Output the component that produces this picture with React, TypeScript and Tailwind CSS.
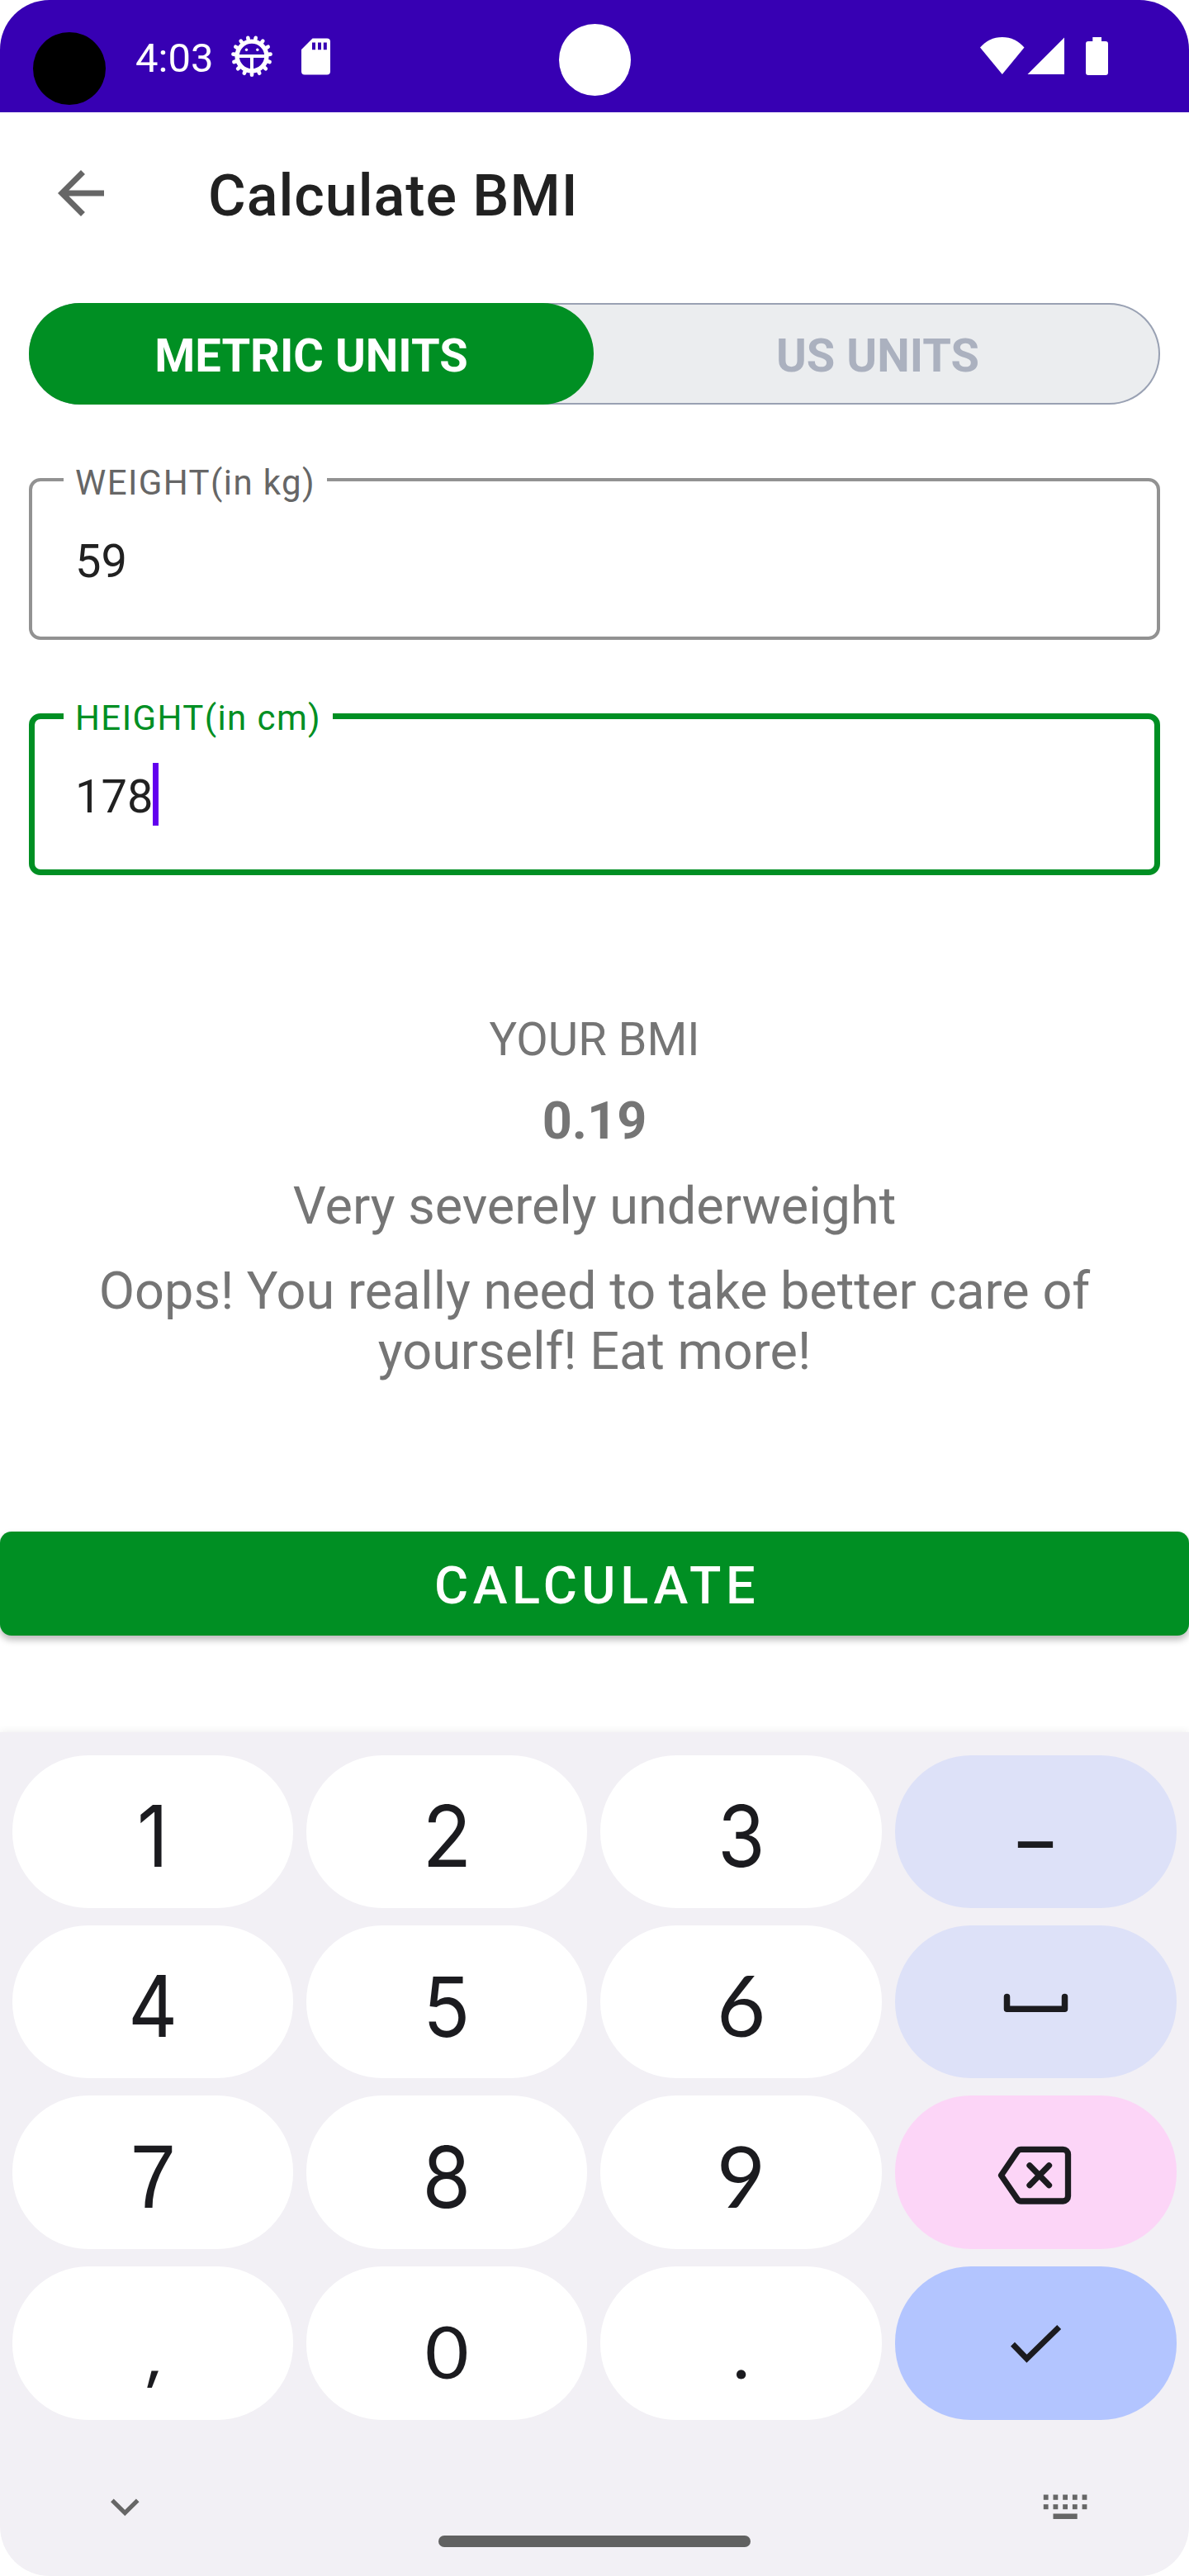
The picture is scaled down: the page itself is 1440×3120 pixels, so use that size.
import React from "react";

const GEAR_TEETH = Array.from({ length: 15 }, (_, i) => {
  const a = Math.PI / 2 + (i * 2 * Math.PI) / 15;
  return {
    x1: 25 + Math.cos(a) * 18,
    y1: 25 + Math.sin(a) * 18,
    x2: 25 + Math.cos(a) * 22.7,
    y2: 25 + Math.sin(a) * 22.7,
  };
});

function DebugIcon() {
  return (
    <svg className="ml-[22px] h-[50px] w-[50px]" viewBox="0 0 50 50" fill="none" stroke="#fff">
      <circle cx="25" cy="25" r="17.9" strokeWidth="5.400" />
      {GEAR_TEETH.map((t, i) => (
        <line key={i} {...t} strokeWidth="4.600" strokeLinecap="round" />
      ))}
      <path d="M9 25H41" strokeWidth="4" />
      <path d="M25 25V42" strokeWidth="4" />
      <circle cx="18.5" cy="17.3" r="1.7" fill="#fff" stroke="none" />
      <circle cx="31.8" cy="17.3" r="1.7" fill="#fff" stroke="none" />
    </svg>
  );
}

function SdCardIcon() {
  return (
    <svg className="ml-[35px] h-[45px] w-[35px]" viewBox="0 0 35 45">
      <path
        fill="#fff"
        fillRule="evenodd"
        d="M13.5 .5H31a4 4 0 0 1 4 4V40.500a4 4 0 0 1-4 4H4a4 4 0 0 1-4-4V14ZM13 5.500v8.700h4V5.500Zm7 0v8.700h4V5.500Zm6.800 0v8.700h4V5.500Z"
      />
    </svg>
  );
}

function StatusBar() {
  return (
    <header className="relative flex h-[136px] items-center bg-[#3700b3] pr-[98px] pl-[40px] text-white">
      <div className="mt-[30px] h-[88px] w-[88px] rounded-full bg-black" />
      <span className="ml-[36px] w-[94px] pt-[6px] text-[49px] leading-[58px]">4:03</span>
      <DebugIcon />
      <SdCardIcon />
      <div className="absolute top-[29px] left-[677px] h-[87px] w-[87px] rounded-full bg-white" />
      <div className="ml-auto flex items-start">
        <svg className="h-[46px] w-[54px]" viewBox="0 0 54 46" fill="#fff">
          <path d="M0 12.500C7 4.500 16 0 26.800 0S46.500 4.500 53.500 12.500L26.800 45Z" />
        </svg>
        <svg className="ml-[3px] h-[46px] w-[46px]" viewBox="0 0 46 46" fill="#fff">
          <path d="M.5 45L45 .5V45Z" />
        </svg>
        <svg className="ml-[25px] h-[46px] w-[27px]" viewBox="0 0 27 46" fill="#fff">
          <path d="M8.300 0H19V5H24a3 3 0 0 1 3 3V43a3 3 0 0 1-3 3H3a3 3 0 0 1-3-3V8a3 3 0 0 1 3-3H8.300Z" />
        </svg>
      </div>
    </header>
  );
}

function Toolbar() {
  return (
    <div className="flex h-[196px] items-center pl-[56px]">
      <svg className="h-[84px] w-[84px]" viewBox="0 0 24 24" fill="#666">
        <path d="M20 11H7.830l5.590-5.590L12 4l-8 8 8 8 1.410-1.410L7.830 13H20v-2z" />
      </svg>
      <h1 className="ml-[112px] pt-[6px] text-[70px] leading-[82px] font-medium tracking-[0.98px] text-[#212121]">
        Calculate BMI
      </h1>
    </div>
  );
}

function UnitToggle() {
  return (
    <div className="mx-[35px] mt-[35px] flex h-[123px] rounded-full bg-[#ebedef] text-[56px] font-bold shadow-[inset_0_0_0_2px_#99a1b3]">
      <button className="flex flex-1 items-center justify-center rounded-full bg-[#008f23] pt-[5px] text-white">
        METRIC UNITS
      </button>
      <button className="flex flex-1 items-center justify-center pt-[5px] pl-[2px] text-[#abb1bf]">US UNITS</button>
    </div>
  );
}

function Field(props: { label: string; value: string; focused?: boolean; className: string }) {
  const { label, value, focused, className } = props;
  return (
    <div
      className={
        "relative mx-[35px] flex h-[196px] items-center rounded-[14px] " +
        (focused ? "border-[7px] border-[#008f23] pl-[49px] " : "border-4 border-[#929292] pl-[52px] ") +
        className
      }
    >
      <span
        className={
          "absolute bg-white pr-[16px] pl-[14px] text-[42px] leading-[50px] tracking-[1.4px] whitespace-nowrap " +
          (focused ? "-top-[26px] left-[35px] w-[326px] text-[#008f23]" : "-top-[23px] left-[38px] w-[319px] text-[#666]")
        }
      >
        {label}
      </span>
      <span className="pt-[6px] text-[56px] leading-[66px] text-[#212121]">{value}</span>
      {focused && <span className="h-[76px] w-[7px] bg-[#6200ee]" />}
    </div>
  );
}

function Result() {
  return (
    <section className="mt-[166px] flex flex-col items-center gap-[29px] text-center text-[63px] leading-[74px] text-[#757575]">
      <p className="text-[56px] leading-[66px]">YOUR BMI</p>
      <p className="font-bold">0.19</p>
      <p>Very severely underweight</p>
      <p className="w-[1300px] leading-[73px]">
        Oops! You really need to take better care of
        <br />
        yourself! Eat more!
      </p>
    </section>
  );
}

function SpaceIcon() {
  return (
    <svg className="h-[186px] w-[341px]" viewBox="0 0 341 186" fill="none" stroke="#1b1b1f">
      <path d="M135.500 86.500V101.300H205.500V86.500" strokeWidth="7.500" strokeLinecap="round" strokeLinejoin="round" />
    </svg>
  );
}

function BackspaceIcon() {
  return (
    <svg
      className="h-[186px] w-[341px]"
      viewBox="0 0 341 186"
      fill="none"
      stroke="#1b1b1f"
      strokeWidth="7.300"
      strokeLinecap="round"
      strokeLinejoin="round"
    >
      <path d="M152.500 65.300H203.500a6 6 0 0 1 6 6V122a6 6 0 0 1-6 6H152.500a5 5 0 0 1-4-2L128.500 96.700L148.500 67.300a5 5 0 0 1 4-2Z" />
      <path d="M163 84.800L186.500 108.700M186.500 84.800L163 108.700" />
    </svg>
  );
}

function CheckIcon() {
  return (
    <svg className="h-[186px] w-[341px]" viewBox="0 0 341 186" fill="none" stroke="#1b1b1f" strokeWidth="7">
      <path d="M142.500 94.300L159.500 111.700L198.700 73.500" />
    </svg>
  );
}

const KEYS: { id: string; bg: string; content: React.ReactNode; font?: string }[] = [
  { id: "1", bg: "bg-white", content: "1", font: "font-['Inter'] text-[103px] leading-[195px] scale-x-[0.9]" },
  { id: "2", bg: "bg-white", content: "2", font: "font-['Inter'] text-[103px] leading-[195px] scale-x-[0.95]" },
  { id: "3", bg: "bg-white", content: "3", font: "font-['Inter'] text-[103px] leading-[195px] scale-x-[0.9]" },
  { id: "-", bg: "bg-[#dde1f8]", content: "-", font: "font-['Inter'] text-[96px] leading-[207px] scale-x-[1.38]" },
  { id: "4", bg: "bg-white", content: "4", font: "font-['Inter'] text-[103px] leading-[195px] scale-x-[0.9]" },
  { id: "5", bg: "bg-white", content: "5", font: "font-['Inter'] text-[101px] leading-[196px] scale-x-[0.93]" },
  { id: "6", bg: "bg-white", content: "6", font: "font-['Lato'] text-[102px] leading-[191px]" },
  { id: "space", bg: "bg-[#dde1f8]", content: <SpaceIcon /> },
  { id: "7", bg: "bg-white", content: "7", font: "font-['Liberation_Sans'] text-[109px] leading-[196px] scale-x-[0.92]" },
  { id: "8", bg: "bg-white", content: "8", font: "font-['Inter'] text-[103px] leading-[197px] scale-x-[0.92]" },
  { id: "9", bg: "bg-white", content: "9", font: "font-['Lato'] text-[102px] leading-[193px]" },
  { id: "backspace", bg: "bg-[#fcd5f7]", content: <BackspaceIcon /> },
  { id: ",", bg: "bg-white", content: ",", font: "pl-[8px] font-['Inter'] text-[72px] leading-[215px] font-medium -skew-x-6" },
  { id: "0", bg: "bg-white", content: "0", font: "font-['Lato'] text-[87px] leading-[205px] scale-x-[1.05]" },
  { id: ".", bg: "bg-white", content: ".", font: "font-['Lato'] text-[90px] leading-[203px]" },
  { id: "enter", bg: "bg-[#b3c5ff]", content: <CheckIcon /> },
];

function Keyboard() {
  return (
    <section className="mt-[117px] flex-1 rounded-b-[60px] bg-[#f2f0f5] px-[15px] pt-[28px] text-[#1b1b1f] shadow-[0_-2px_8px_rgba(0,0,0,0.06)]">
      <div className="grid grid-cols-[340px_340px_341px_341px] grid-rows-[185px_185px_186px_186px] gap-x-[16px] gap-y-[21px]">
        {KEYS.map((k) => (
          <button key={k.id} className={"flex items-start justify-center overflow-hidden rounded-[92px] " + k.bg}>
            <span className={k.font}>{k.content}</span>
          </button>
        ))}
      </div>
      <div className="mt-[90px] flex items-start justify-between pr-[108px] pl-[119px]">
        <svg className="mt-[5px] h-[22px] w-[36px]" viewBox="0 0 36 22" fill="none" stroke="#666" strokeWidth="5.200">
          <path d="M1.900 2.300L17.300 17.500L32.700 2.300" />
        </svg>
        <svg className="h-[31px] w-[54px]" viewBox="0 0 54 31" fill="#666">
          {[0, 1, 2, 3, 4].map((c) => (
            <g key={c}>
              <rect x={0.8 + c * 11.700} y="0.500" width="5.800" height="6.300" />
              <rect x={0.8 + c * 11.700} y="12.200" width="5.800" height="6" />
            </g>
          ))}
          <rect x="12.500" y="23.500" width="29.200" height="6.500" />
        </svg>
      </div>
      <div className="mx-auto mt-[19px] h-[14px] w-[378px] rounded-full bg-[#616161]" />
    </section>
  );
}

export default function App() {
  return (
    <div className="h-[3120px] w-[1440px] bg-white">
      <main className="flex h-full flex-col overflow-hidden rounded-[60px] bg-white font-['Roboto',sans-serif]">
        <StatusBar />
        <Toolbar />
        <UnitToggle />
        <Field label="WEIGHT(in kg)" value="59" className="mt-[89px]" />
        <Field label="HEIGHT(in cm)" value="178" focused className="mt-[89px]" />
        <Result />
        <button className="mt-[182px] h-[126px] rounded-[14px] bg-[#008f23] pt-[6px] pl-[6px] text-[63px] font-medium tracking-[5.6px] text-white shadow-[0_5px_8px_rgba(0,0,0,0.28)]">
          CALCULATE
        </button>
        <Keyboard />
      </main>
    </div>
  );
}
